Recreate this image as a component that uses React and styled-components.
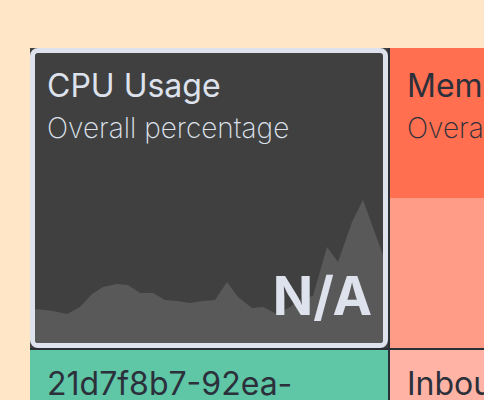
import styled, { createGlobalStyle } from 'styled-components'

const GlobalStyle = createGlobalStyle`
    html, body {
        margin: 0;
        padding: 0;
        background: #ffe6c7;
        overflow: hidden;
        font-family: Inter, "Noto Sans", sans-serif;
    }
`;

const Page = styled.div`
    width: 484px;
    height: 400px;
    padding: 48px 0 0 30px;
    box-sizing: border-box;
    overflow: hidden;
`;

const Grid = styled.div`
    display: grid;
    grid-template-columns: 358px 358px;
    grid-auto-rows: 300px;
    gap: 2px;
    width: max-content;
    background: #2b2f38;
`;

const Cell = styled.div`
    position: relative;
    box-sizing: border-box;
    background: ${({ bg }) => bg};
    color: #2b303b;
    overflow: hidden;
    display: flex;
    flex-direction: column;
`;

const CardFrame = styled.div`
    position: relative;
    flex: 1;
    border: 5px solid #dde2ec;
    border-radius: 8px;
    background: #404040;
    overflow: hidden;
    color: #dde2ec;
`;

const Head = styled.div`
    position: relative;
    padding: ${({ inset }) => inset ? '14px 12px' : '19px 17px'};
    height: ${({ h }) => h || 'auto'};
    box-sizing: border-box;
`;

const Title = styled.div`
    font-size: 32px;
    font-weight: 400;
    line-height: 38px;
    white-space: nowrap;
`;

const Subtitle = styled.div`
    font-size: 28px;
    font-weight: 200;
    line-height: 32px;
    margin-top: 7px;
    white-space: nowrap;
`;

const Filler = styled.div`
    flex: 1;
    background: ${({ bg }) => bg};
`;

const Chart = styled.svg`
    position: absolute;
    left: 0;
    bottom: 0;
    width: 348px;
    height: 290px;
`;

const Value = styled.div`
    position: absolute;
    right: 11px;
    bottom: 20px;
    font-size: 53px;
    font-weight: 700;
    line-height: 1;
    color: #dde2ec;
`;

const Label = styled.div`
    padding: 15px 17px;
    font-size: 32px;
    font-weight: 400;
    line-height: 38px;
    color: #2b303b;
    white-space: nowrap;
`;

// sparkline points in page coords, shifted to the card's inner box (origin 35,53)
const raw = [
    [35, 309], [53, 311], [67, 314], [80, 307], [92, 294], [103, 287], [117, 284], [128, 285],
    [140, 293], [153, 293], [165, 300], [177, 301], [190, 303], [203, 301], [215, 300],
    [227, 282], [238, 297], [252, 308], [263, 307], [277, 314], [290, 307], [303, 298],
    [313, 296], [327, 247], [338, 262], [352, 222], [363, 200], [383, 255],
]

const chartPath = () => {
    const pts = raw.map(([x, y]) => `${x - 35},${y - 53}`)
    return `M0,290 L${pts.join(' L')} L348,290 Z`
}

const App = () => {
    return (
        <Page>
            <GlobalStyle />
            <Grid>
                <Cell bg="#404040">
                    <CardFrame>
                        <Chart viewBox="0 0 348 290">
                            <path d={chartPath()} fill="#595959" />
                        </Chart>
                        <Head inset>
                            <Title>CPU Usage</Title>
                            <Subtitle>Overall percentage</Subtitle>
                        </Head>
                        <Value>N/A</Value>
                    </CardFrame>
                </Cell>
                <Cell bg="#ff6f50">
                    <Head h="150px">
                        <Title>Memory Usage</Title>
                        <Subtitle>Overall percentage</Subtitle>
                    </Head>
                    <Filler bg="#ff9c87" />
                </Cell>
                <Cell bg="#5fc6a6">
                    <Label>21d7f8b7-92ea-</Label>
                </Cell>
                <Cell bg="#ffb3a4">
                    <Label>Inbound traffic</Label>
                </Cell>
            </Grid>
        </Page>
    )
}

export default App
